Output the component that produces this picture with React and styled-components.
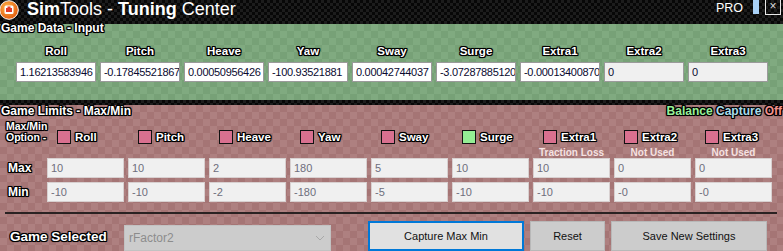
import React from "react";
import styled, { createGlobalStyle } from "styled-components";

const GlobalStyle = createGlobalStyle`
  html, body {
    margin: 0;
    padding: 0;
    background: #000;
  }
  body {
    font-family: "Liberation Sans", Arial, sans-serif;
    overflow: hidden;
  }
`;

const dataCols = [
  { name: "Roll", value: "1.16213583946" },
  { name: "Pitch", value: "-0.17845521867" },
  { name: "Heave", value: "0.00050956426" },
  { name: "Yaw", value: "-100.93521881" },
  { name: "Sway", value: "0.00042744037" },
  { name: "Surge", value: "-3.07287885120" },
  { name: "Extra1", value: "-0.00013400870" },
  { name: "Extra2", value: "0", off: true },
  { name: "Extra3", value: "0", off: true },
];

const limits = [
  { name: "Roll", max: "10", min: "-10" },
  { name: "Pitch", max: "10", min: "-10" },
  { name: "Heave", max: "2", min: "-2" },
  { name: "Yaw", max: "180", min: "-180" },
  { name: "Sway", max: "5", min: "-5" },
  { name: "Surge", max: "10", min: "-10", on: true },
  { name: "Extra1", max: "10", min: "-10", note: "Traction Loss" },
  { name: "Extra2", max: "0", min: "-0", note: "Not Used" },
  { name: "Extra3", max: "0", min: "-0", note: "Not Used" },
];

// white text with the thick black rim the WinForms labels have
const outline = `
  text-shadow: 1px 0 0 #000, -1px 0 0 #000, 0 1px 0 #000, 0 -1px 0 #000,
    1px 1px 0 #000, -1px -1px 0 #000, 1px -1px 0 #000, -1px 1px 0 #000,
    0 0 2px #000, 0 0 2px #000;
`;

const Logo = () => (
  <svg width="20" height="20" viewBox="0 0 20 20">
    <defs>
      <radialGradient id="lg" cx="40%" cy="35%" r="70%">
        <stop offset="0" stopColor="#ffb347" />
        <stop offset="1" stopColor="#e2580c" />
      </radialGradient>
    </defs>
    <circle cx="9" cy="10" r="9.3" fill="url(#lg)" stroke="#fff" strokeWidth="1" />
    <rect x="4.5" y="5.5" width="9" height="8.5" rx="1.5" fill="#fff" />
    <rect x="6" y="8" width="6" height="4" fill="#e23a2a" />
    <rect x="7.5" y="6.5" width="3" height="1.5" fill="#e23a2a" />
  </svg>
);

const App = () => {
  return (
    <Window>
      <GlobalStyle />
      <TitleBar>
        <Logo />
        <Title>
          <b>Sim</b>Tools - <b>Tuning</b> Center
        </Title>
        <Pro>PRO</Pro>
        <BlueTab />
        <CloseBox>×</CloseBox>
      </TitleBar>

      <DataPanel>
        <SectionTitle $top={-2}>Game Data - Input</SectionTitle>
        <DataGrid>
          {dataCols.map((c) => (
            <ColLabel key={c.name}>{c.name}</ColLabel>
          ))}
          {dataCols.map((c) => (
            <DataInput key={c.name} readOnly value={c.value} $off={c.off} />
          ))}
        </DataGrid>
      </DataPanel>

      <Band />

      <LimitsPanel>
        <LimitsHeader>
          <SectionTitle $top={0}>Game Limits - Max/Min</SectionTitle>
          <Balance>
            <span style={{ color: "#98f098" }}>Balance</span>{" "}
            <span style={{ color: "#a8dcea" }}>Capture</span>{" "}
            <span style={{ color: "#f4908c" }}>Off</span>
          </Balance>
        </LimitsHeader>

        <LimitGrid>
          <OptionLabel>
            Max/Min
            <br />
            Option -
          </OptionLabel>
          {limits.map((l) => (
            <CheckItem key={l.name}>
              <Box $on={l.on} />
              <CheckText>{l.name}</CheckText>
            </CheckItem>
          ))}
        </LimitGrid>

        <NoteGrid>
          <span />
          {limits.map((l) => (
            <Note key={l.name}>{l.note || ""}</Note>
          ))}
        </NoteGrid>

        <ValueGrid $top={-1}>
          <RowLabel>Max</RowLabel>
          {limits.map((l) => (
            <LimitInput key={l.name} readOnly value={l.max} />
          ))}
        </ValueGrid>
        <ValueGrid $top={4}>
          <RowLabel>Min</RowLabel>
          {limits.map((l) => (
            <LimitInput key={l.name} readOnly value={l.min} />
          ))}
        </ValueGrid>

        <Separator />

        <BottomRow>
          <GameLabel>Game Selected</GameLabel>
          <Select>
            <span>rFactor2</span>
            <svg width="10" height="6" viewBox="0 0 10 6">
              <path d="M1 1 L5 5 L9 1" fill="none" stroke="#a8a8a8" strokeWidth="1" />
            </svg>
          </Select>
          <Button $primary $w={156} $ml={37}>Capture Max Min</Button>
          <Button $w={75} $ml={6}>Reset</Button>
          <Button $w={156} $ml={6}>Save New Settings</Button>
        </BottomRow>
      </LimitsPanel>
    </Window>
  );
};

const carbon = `
  background-color: #050505;
  background-image:
    repeating-conic-gradient(#1c1c1c 0 25%, #070707 0 50%);
  background-size: 6px 6px;
`;

const Window = styled.div`
  width: 783px;
  height: 251px;
  display: flex;
  flex-direction: column;
  overflow: hidden;
`;

const TitleBar = styled.div`
  ${carbon}
  flex: none;
  height: 24px;
  display: flex;
  align-items: flex-start;
  color: #fff;
  position: relative;
  z-index: 0;
  svg {
    flex: none;
  }
`;

const Title = styled.div`
  font-size: 18px;
  line-height: 18px;
  margin-left: 7px;
  white-space: nowrap;
  b {
    font-weight: bold;
  }
`;

const Pro = styled.div`
  margin-left: auto;
  font-size: 12.5px;
  line-height: 14px;
  margin-top: 1px;
  color: #fff;
`;

const BlueTab = styled.div`
  width: 6px;
  height: 14px;
  background: #a9d1f7;
  margin-left: 10px;
`;

const CloseBox = styled.div`
  width: 14px;
  height: 14px;
  border: 1px solid #e8e8e8;
  border-top: none;
  margin-left: 6px;
  margin-right: 2px;
  font-size: 12px;
  line-height: 13px;
  text-align: center;
  color: #ddd;
`;

const DataPanel = styled.div`
  flex: none;
  height: 76px;
  background-color: #7aa47a;
  background-image: repeating-conic-gradient(#80aa80 0 25%, #77a177 0 50%);
  background-size: 14px 14px;
  position: relative;
  z-index: 1;
`;

const SectionTitle = styled.div`
  font-size: 12px;
  font-weight: bold;
  line-height: 12px;
  color: #fff;
  margin-top: ${(p) => p.$top}px;
  padding-left: 1px;
  white-space: nowrap;
  ${outline}
`;

const DataGrid = styled.div`
  display: grid;
  grid-template-columns: repeat(9, 80px);
  column-gap: 4px;
  padding-left: 16px;
  margin-top: 10px;
`;

const ColLabel = styled.div`
  text-align: center;
  font-size: 11.5px;
  font-weight: bold;
  line-height: 14px;
  color: #fff;
  margin-bottom: 4px;
  ${outline}
`;

const inputBase = `
  box-sizing: border-box;
  width: 100%;
  height: 20px;
  padding: 0 0 0 3px;
  font-family: "Liberation Sans", Arial, sans-serif;
  font-size: 11px;
  outline: none;
  margin: 0;
`;

const DataInput = styled.input`
  ${inputBase}
  background: ${(p) => (p.$off ? "#f0f0f0" : "#ffffff")};
  border: 1px solid #9a9a9a;
  color: #0a0a30;
  letter-spacing: -0.3px;
`;

const Band = styled.div`
  ${carbon}
  flex: none;
  height: 5px;
`;

const LimitsPanel = styled.div`
  flex: 1;
  min-height: 0;
  overflow: hidden;
  background-color: #a97a7a;
  background-image: repeating-conic-gradient(#ae8080 0 25%, #a57575 0 50%);
  background-size: 14px 14px;
  display: flex;
  flex-direction: column;
  & > * {
    flex: none;
  }
`;

const LimitsHeader = styled.div`
  display: flex;
  justify-content: space-between;
  align-items: flex-start;
  height: 12px;
`;

const Balance = styled.div`
  font-size: 12px;
  font-weight: bold;
  line-height: 12px;
  margin-right: 1px;
  white-space: nowrap;
  ${outline}
`;

const LimitGrid = styled.div`
  display: grid;
  grid-template-columns: 43px repeat(9, 77px);
  column-gap: 4px;
  align-items: start;
  height: 23px;
  margin-top: 4px;
`;

const OptionLabel = styled.div`
  font-size: 10.5px;
  font-weight: bold;
  line-height: 11px;
  color: #fff;
  padding-left: 6px;
  white-space: nowrap;
  ${outline}
`;

const CheckItem = styled.div`
  display: flex;
  align-items: center;
  gap: 4px;
  height: 14px;
  padding-left: 10px;
  margin-top: 9px;
`;

const Box = styled.div`
  width: 12px;
  height: 12px;
  border: 1px solid #111;
  background: ${(p) => (p.$on ? "#94ee94" : "#d9708f")};
  flex: none;
`;

const CheckText = styled.span`
  font-size: 11.5px;
  font-weight: bold;
  line-height: 14px;
  color: #fff;
  ${outline}
`;

const NoteGrid = styled.div`
  display: grid;
  grid-template-columns: 43px repeat(9, 77px);
  column-gap: 4px;
  height: 12px;
  margin-top: 3px;
`;

const Note = styled.div`
  text-align: center;
  font-size: 10px;
  font-weight: bold;
  line-height: 12px;
  color: #f6e2e2;
  white-space: nowrap;
`;

const ValueGrid = styled.div`
  display: grid;
  grid-template-columns: 43px repeat(9, 77px);
  column-gap: 4px;
  align-items: center;
  height: 20px;
  margin-top: ${(p) => p.$top}px;
`;

const RowLabel = styled.div`
  font-size: 12px;
  font-weight: bold;
  color: #fff;
  padding-left: 8px;
  ${outline}
`;

const LimitInput = styled.input`
  ${inputBase}
  background: #f0f0f0;
  border: 1px solid #d8d0d0;
  color: #6e6e7c;
`;

const Separator = styled.div`
  height: 2px;
  background: #2a2222;
  margin: 10px 6px 0 5px;
`;

const BottomRow = styled.div`
  display: flex;
  align-items: center;
  height: 30px;
  margin-top: 7px;
  padding-left: 10px;
`;

const GameLabel = styled.div`
  font-size: 13.5px;
  font-weight: bold;
  color: #fff;
  width: 100px;
  white-space: nowrap;
  ${outline}
`;

const Select = styled.div`
  box-sizing: border-box;
  width: 207px;
  height: 26px;
  margin-left: 14px;
  margin-top: 3px;
  background: #cccccc;
  border: 1px solid #c2c2c2;
  display: flex;
  align-items: center;
  justify-content: space-between;
  padding: 0 5px 0 4px;
  font-size: 12px;
  color: #8c8c8c;
`;

const Button = styled.div`
  box-sizing: border-box;
  width: ${(p) => p.$w}px;
  margin-left: ${(p) => p.$ml}px;
  height: 30px;
  display: flex;
  align-items: center;
  justify-content: center;
  font-size: 11px;
  color: #111;
  background: ${(p) => (p.$primary ? "#e1e1e1" : "#cccccc")};
  border: ${(p) => (p.$primary ? "2px solid #0078d7" : "1px solid #b8b8b8")};
`;

export default App;
